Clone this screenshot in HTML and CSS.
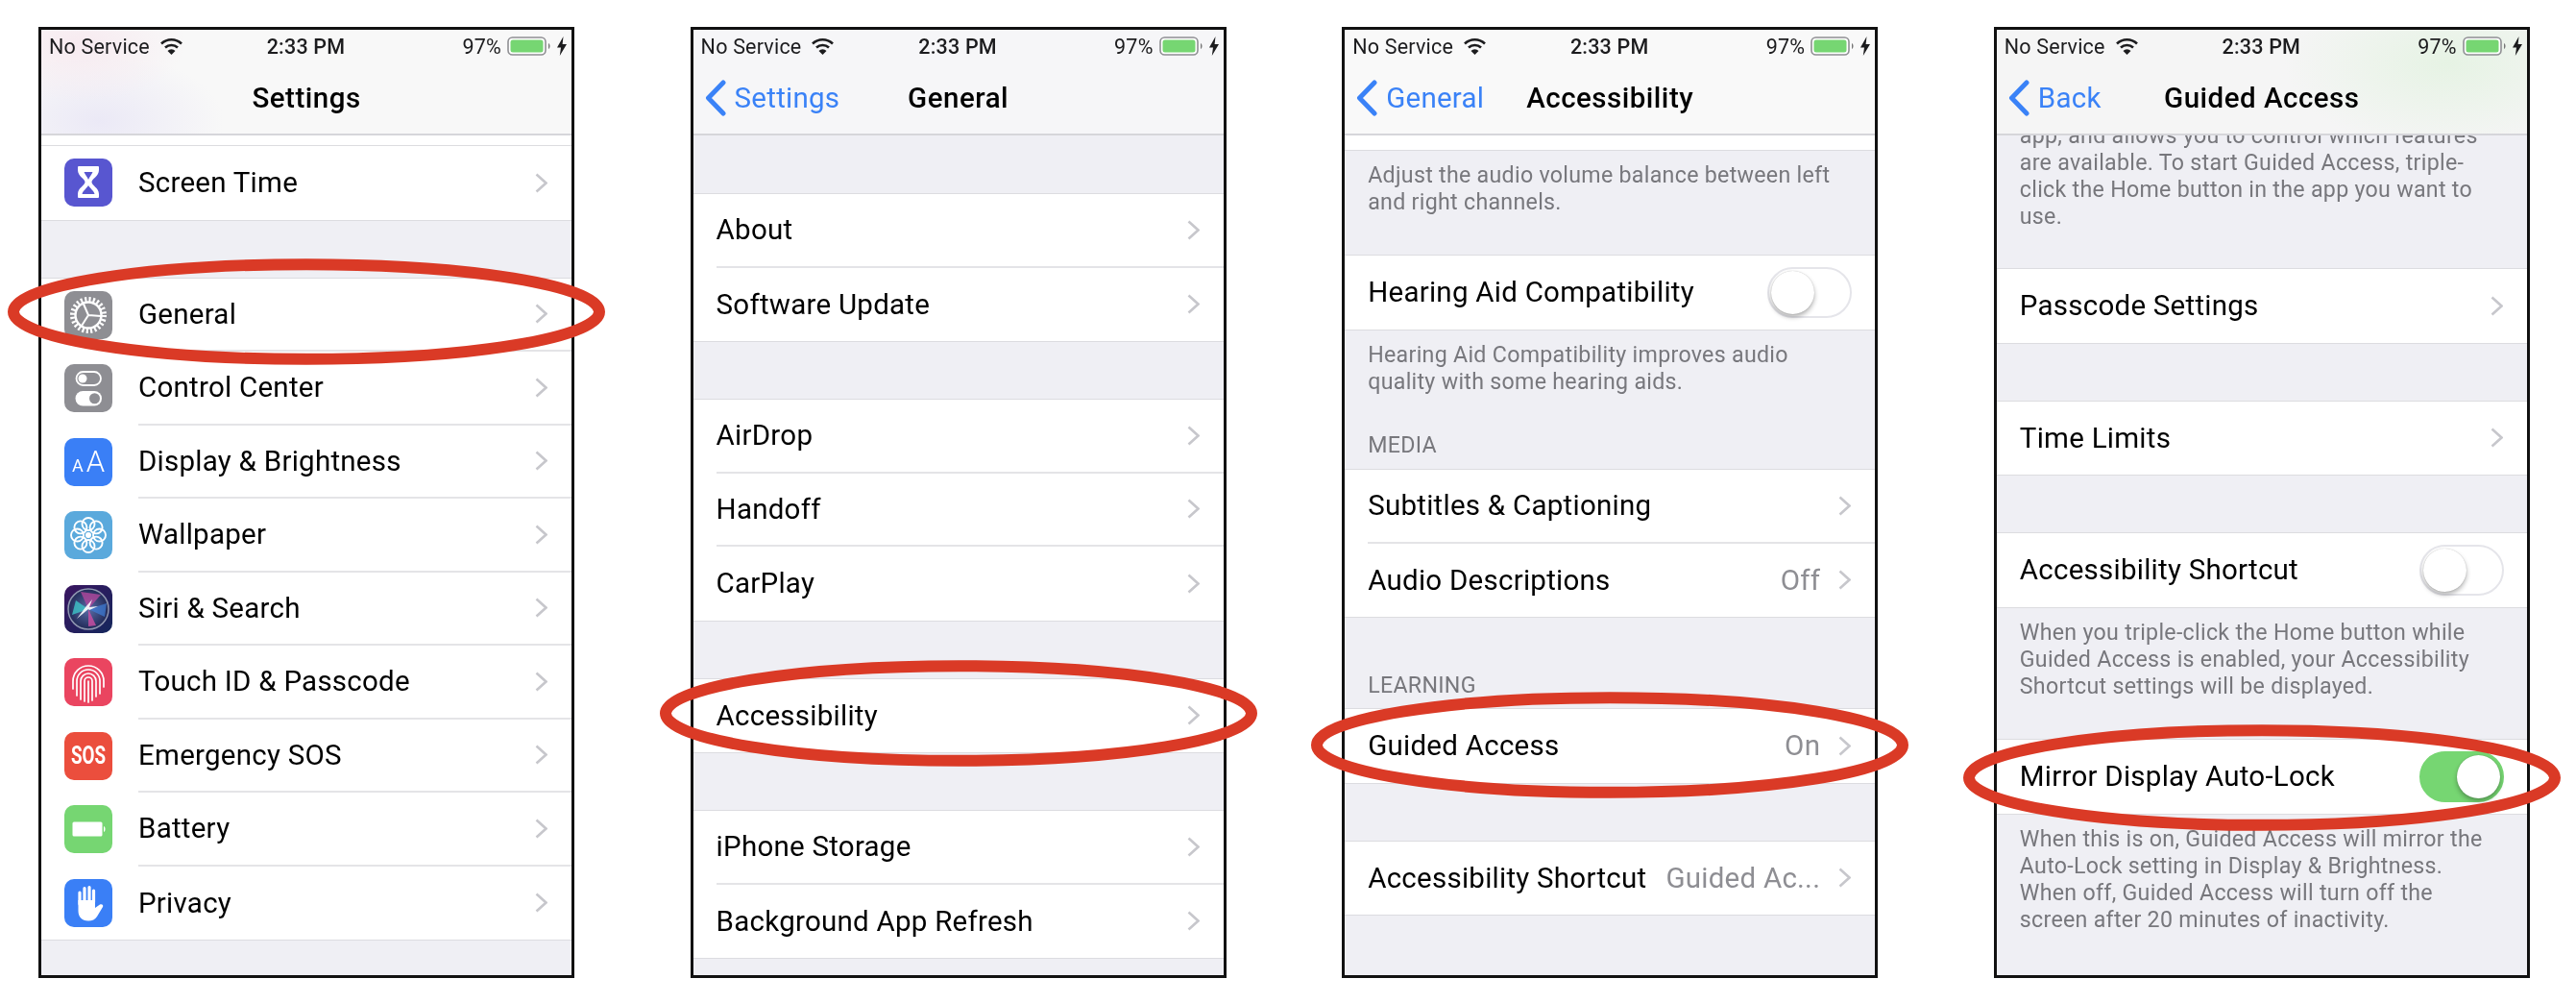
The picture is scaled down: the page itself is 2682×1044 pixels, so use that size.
FILE: index.html
```html
<!DOCTYPE html>
<html>
<head>
    <meta charset="utf-8">
    <title>Guided Access steps</title>
    <link rel="stylesheet" href="styles.css">
</head>
<body>
    <svg class="sprite">
        <symbol id="chev" viewBox="0 0 13 21"><path d="M1.500 1.500l10 9-10 9" fill="none" stroke="currentColor" stroke-width="2.600"/></symbol>
        <symbol id="back" viewBox="0 0 24 38"><path d="M20 3L4.500 19 20 35" fill="none" stroke="currentColor" stroke-width="5" stroke-linecap="round" stroke-linejoin="round"/></symbol>
        <symbol id="wifi" viewBox="0 0 24 18"><path d="M1.500 6.500a15 15 0 0 1 21 0M5.500 10.500a9.500 9.500 0 0 1 13 0" fill="none" stroke="currentColor" stroke-width="2.600"/><path d="M12 18l-4-4a5.600 5.600 0 0 1 8 0z" fill="currentColor"/></symbol>
        <symbol id="batt" viewBox="0 0 46 20"><rect x="1" y="1" width="39" height="18" rx="4.500" fill="#fff" stroke="#8f8f93" stroke-width="1.600"/><rect x="3.500" y="3.500" width="34" height="13" rx="2.500" fill="#76d672"/><path d="M43 7c2 1 2 5 0 6z" fill="#777"/></symbol>
        <symbol id="bolt" viewBox="0 0 10 20"><path d="M6.500 0L0 11.500h4L2.800 20 10 8H5.600z" fill="currentColor"/></symbol>
        <symbol id="ring" viewBox="0 0 624 111"><ellipse cx="312" cy="55.500" rx="306" ry="49.500" fill="none" stroke="#da3a26" stroke-width="12"/></symbol>
    </svg>

    <div class="board">
        <!-- settings -->
        <div class="phone">
            <div class="screen">
                <div class="bar bar-pink">
                    <div class="status">
                        <div class="status-left">No Service <svg class="wifi"><use href="#wifi"/></svg></div>
                        <div class="status-time">2:33 PM</div>
                        <div class="status-right">97% <svg class="batt"><use href="#batt"/></svg> <svg class="bolt"><use href="#bolt"/></svg></div>
                    </div>
                    <div class="nav">
                        <div></div>
                        <div class="nav-title">Settings</div>
                        <div></div>
                    </div>
                </div>
                <div class="content">
                    <div class="top-sliver"></div>
                    <div class="group">
                        <div class="row">
                            <svg class="icon" viewBox="0 0 50 50"><rect width="50" height="50" rx="10" fill="#5856d0"/><path d="M15 8h20a1 1 0 0 1 1 1v3c0 6.500-7.500 9-7.500 12.500S36 30.500 36 37v3a1 1 0 0 1-1 1H15a1 1 0 0 1-1-1v-3c0-6.500 7.500-9 7.500-12.500S14 18.500 14 12V9a1 1 0 0 1 1-1z" fill="#fff"/><path d="M20.500 14h9c-1 3-3.500 5-4.500 8-1-3-3.500-5-4.500-8zM18.500 37c1-4 5-6 6.500-9 1.500 3 5.500 5 6.500 9z" fill="#5856d0"/></svg>
                            <div class="row-body"><span class="label">Screen Time</span><svg class="chev"><use href="#chev"/></svg></div>
                        </div>
                    </div>
                    <div class="gap"></div>
                    <div class="group">
                        <div class="row">
                            <svg class="icon" viewBox="0 0 50 50"><rect width="50" height="50" rx="10" fill="#8e8e93"/><circle cx="25" cy="25" r="16.500" fill="none" stroke="#fff" stroke-width="5" stroke-dasharray="2.100 2.220"/><circle cx="25" cy="25" r="13.500" fill="none" stroke="#fff" stroke-width="2.400"/><path d="M25 25l-5-11.500M25 25l13 1M25 25l-7 11" stroke="#fff" stroke-width="2"/></svg>
                            <div class="row-body"><span class="label">General</span><svg class="chev"><use href="#chev"/></svg></div>
                        </div>
                        <div class="row">
                            <svg class="icon" viewBox="0 0 50 50"><rect width="50" height="50" rx="10" fill="#8e8e93"/><rect x="12.500" y="8" width="25.500" height="14" rx="7" fill="none" stroke="#fff" stroke-width="1.800"/><circle cx="19" cy="15" r="4.500" fill="#fff"/><rect x="11.500" y="28" width="27.500" height="15.500" rx="7.750" fill="#fff"/><circle cx="31.500" cy="35.750" r="5.500" fill="#8e8e93"/></svg>
                            <div class="row-body"><span class="label">Control Center</span><svg class="chev"><use href="#chev"/></svg></div>
                        </div>
                        <div class="row">
                            <div class="icon icon-blue icon-text"><span class="aa-small">A</span><span class="aa-large">A</span></div>
                            <div class="row-body"><span class="label">Display &amp; Brightness</span><svg class="chev"><use href="#chev"/></svg></div>
                        </div>
                        <div class="row">
                            <svg class="icon" viewBox="0 0 50 50"><rect width="50" height="50" rx="10" fill="#5aa9dc"/><g fill="none" stroke="#fff" stroke-width="1.900"><circle cx="25" cy="13.500" r="6.500"/><circle cx="33.100" cy="16.900" r="6.500"/><circle cx="36.500" cy="25" r="6.500"/><circle cx="33.100" cy="33.100" r="6.500"/><circle cx="25" cy="36.500" r="6.500"/><circle cx="16.900" cy="33.100" r="6.500"/><circle cx="13.500" cy="25" r="6.500"/><circle cx="16.900" cy="16.900" r="6.500"/></g><circle cx="25" cy="25" r="3" fill="#fff"/></svg>
                            <div class="row-body"><span class="label">Wallpaper</span><svg class="chev"><use href="#chev"/></svg></div>
                        </div>
                        <div class="row">
                            <svg class="icon" viewBox="0 0 50 50"><defs><linearGradient id="siriBg" x1="0" y1="0" x2="1" y2="1"><stop offset="0" stop-color="#3a1560"/><stop offset="1" stop-color="#14275c"/></linearGradient><radialGradient id="siriOrb"><stop offset="0" stop-color="#5a6ea8"/><stop offset="1" stop-color="#222a58"/></radialGradient></defs><rect width="50" height="50" rx="10" fill="url(#siriBg)"/><circle cx="25" cy="25" r="21" fill="url(#siriOrb)" stroke="#8f96b0" stroke-width="1.500"/><path d="M25 25L8 31 12 16z" fill="#3fc6c8" opacity=".8"/><path d="M25 25L17 7 38 10z" fill="#b0479c" opacity=".8"/><path d="M25 25l8 17-8 1z" fill="#cf4fa4" opacity=".8"/><path d="M25 25l19-6-2 14z" fill="#3f7fd8" opacity=".7"/><path d="M25 25L13 35l9-12 7-8-3 8 9-1-9 4z" fill="#fff" opacity=".9"/></svg>
                            <div class="row-body"><span class="label">Siri &amp; Search</span><svg class="chev"><use href="#chev"/></svg></div>
                        </div>
                        <div class="row">
                            <svg class="icon" viewBox="0 0 50 50"><rect width="50" height="50" rx="10" fill="#ea4560"/><path d="M9 32V24a16 16 0 0 1 32 0v6M13 39V24a12 12 0 0 1 24 0v13M17 43V24a8 8 0 0 1 16 0v16M21 45V24a4 4 0 0 1 8 0v20M25 24v22" fill="none" stroke="#fff" stroke-width="1.700" stroke-linecap="round"/></svg>
                            <div class="row-body"><span class="label">Touch ID &amp; Passcode</span><svg class="chev"><use href="#chev"/></svg></div>
                        </div>
                        <div class="row">
                            <div class="icon icon-red icon-text"><span class="sos">SOS</span></div>
                            <div class="row-body"><span class="label">Emergency SOS</span><svg class="chev"><use href="#chev"/></svg></div>
                        </div>
                        <div class="row">
                            <svg class="icon" viewBox="0 0 50 50"><rect width="50" height="50" rx="10" fill="#76d672"/><rect x="8.500" y="17.500" width="31" height="15" rx="1.500" fill="#fff"/><path d="M41 22c2 .5 2 5.500 0 6z" fill="#fff"/></svg>
                            <div class="row-body"><span class="label">Battery</span><svg class="chev"><use href="#chev"/></svg></div>
                        </div>
                        <div class="row">
                            <svg class="icon" viewBox="0 0 50 50"><rect width="50" height="50" rx="10" fill="#3a7ff6"/><path d="M16 26V14M21 24V9.500M26 24V8.500M30.500 24V12" stroke="#fff" stroke-width="3.200" stroke-linecap="round"/><path d="M14.500 22H32v8l5-3.500c2-1 4 .5 3 2.500l-6 10c-2 3-5 4.500-9 4.500-7 0-10.500-4.500-10.500-10.500z" fill="#fff"/></svg>
                            <div class="row-body"><span class="label">Privacy</span><svg class="chev"><use href="#chev"/></svg></div>
                        </div>
                    </div>
                </div>
            </div>
            <svg class="ring ring-1"><use href="#ring"/></svg>
        </div>

        <!-- general -->
        <div class="phone">
            <div class="screen">
                <div class="bar">
                    <div class="status">
                        <div class="status-left">No Service <svg class="wifi"><use href="#wifi"/></svg></div>
                        <div class="status-time">2:33 PM</div>
                        <div class="status-right">97% <svg class="batt"><use href="#batt"/></svg> <svg class="bolt"><use href="#bolt"/></svg></div>
                    </div>
                    <div class="nav">
                        <div class="nav-back"><svg class="back"><use href="#back"/></svg>Settings</div>
                        <div class="nav-title">General</div>
                        <div></div>
                    </div>
                </div>
                <div class="content">
                    <div class="gap"></div>
                    <div class="group">
                        <div class="row"><div class="row-body"><span class="label">About</span><svg class="chev"><use href="#chev"/></svg></div></div>
                        <div class="row"><div class="row-body"><span class="label">Software Update</span><svg class="chev"><use href="#chev"/></svg></div></div>
                    </div>
                    <div class="gap"></div>
                    <div class="group">
                        <div class="row"><div class="row-body"><span class="label">AirDrop</span><svg class="chev"><use href="#chev"/></svg></div></div>
                        <div class="row"><div class="row-body"><span class="label">Handoff</span><svg class="chev"><use href="#chev"/></svg></div></div>
                        <div class="row"><div class="row-body"><span class="label">CarPlay</span><svg class="chev"><use href="#chev"/></svg></div></div>
                    </div>
                    <div class="gap"></div>
                    <div class="group">
                        <div class="row"><div class="row-body"><span class="label">Accessibility</span><svg class="chev"><use href="#chev"/></svg></div></div>
                    </div>
                    <div class="gap"></div>
                    <div class="group">
                        <div class="row"><div class="row-body"><span class="label">iPhone Storage</span><svg class="chev"><use href="#chev"/></svg></div></div>
                        <div class="row"><div class="row-body"><span class="label">Background App Refresh</span><svg class="chev"><use href="#chev"/></svg></div></div>
                    </div>
                </div>
            </div>
            <svg class="ring ring-2"><use href="#ring"/></svg>
        </div>

        <!-- accessibility -->
        <div class="phone">
            <div class="screen">
                <div class="bar bar-light">
                    <div class="status">
                        <div class="status-left">No Service <svg class="wifi"><use href="#wifi"/></svg></div>
                        <div class="status-time">2:33 PM</div>
                        <div class="status-right">97% <svg class="batt"><use href="#batt"/></svg> <svg class="bolt"><use href="#bolt"/></svg></div>
                    </div>
                    <div class="nav">
                        <div class="nav-back"><svg class="back"><use href="#back"/></svg>General</div>
                        <div class="nav-title">Accessibility</div>
                        <div></div>
                    </div>
                </div>
                <div class="content">
                    <div class="top-sliver group"></div>
                    <div class="note">Adjust the audio volume balance between left<br>and right channels.</div>
                    <div class="group">
                        <div class="row"><div class="row-body"><span class="label">Hearing Aid Compatibility</span><div class="toggle"><div class="knob"></div></div></div></div>
                    </div>
                    <div class="note note-short">Hearing Aid Compatibility improves audio<br>quality with some hearing aids.</div>
                    <div class="section section-media">MEDIA</div>
                    <div class="group">
                        <div class="row"><div class="row-body"><span class="label">Subtitles &amp; Captioning</span><svg class="chev"><use href="#chev"/></svg></div></div>
                        <div class="row"><div class="row-body"><span class="label">Audio Descriptions</span><span class="value">Off</span><svg class="chev"><use href="#chev"/></svg></div></div>
                    </div>
                    <div class="section section-learning">LEARNING</div>
                    <div class="group">
                        <div class="row"><div class="row-body"><span class="label">Guided Access</span><span class="value">On</span><svg class="chev"><use href="#chev"/></svg></div></div>
                    </div>
                    <div class="gap"></div>
                    <div class="group">
                        <div class="row"><div class="row-body"><span class="label">Accessibility Shortcut</span><span class="value">Guided Ac...</span><svg class="chev"><use href="#chev"/></svg></div></div>
                    </div>
                </div>
            </div>
            <svg class="ring ring-3"><use href="#ring"/></svg>
        </div>

        <!-- guided access -->
        <div class="phone">
            <div class="screen">
                <div class="bar bar-green">
                    <div class="status">
                        <div class="status-left">No Service <svg class="wifi"><use href="#wifi"/></svg></div>
                        <div class="status-time">2:33 PM</div>
                        <div class="status-right">97% <svg class="batt"><use href="#batt"/></svg> <svg class="bolt"><use href="#bolt"/></svg></div>
                    </div>
                    <div class="nav">
                        <div class="nav-back"><svg class="back"><use href="#back"/></svg>Back</div>
                        <div class="nav-title">Guided Access</div>
                        <div></div>
                    </div>
                </div>
                <div class="content">
                    <div class="note note-scrolled">app, and allows you to control which features<br>are available. To start Guided Access, triple-<br>click the Home button in the app you want to<br>use.</div>
                    <div class="group">
                        <div class="row"><div class="row-body"><span class="label">Passcode Settings</span><svg class="chev"><use href="#chev"/></svg></div></div>
                    </div>
                    <div class="gap"></div>
                    <div class="group">
                        <div class="row"><div class="row-body"><span class="label">Time Limits</span><svg class="chev"><use href="#chev"/></svg></div></div>
                    </div>
                    <div class="gap"></div>
                    <div class="group">
                        <div class="row"><div class="row-body"><span class="label">Accessibility Shortcut</span><div class="toggle"><div class="knob"></div></div></div></div>
                    </div>
                    <div class="note">When you triple-click the Home button while<br>Guided Access is enabled, your Accessibility<br>Shortcut settings will be displayed.</div>
                    <div class="group">
                        <div class="row"><div class="row-body"><span class="label">Mirror Display Auto-Lock</span><div class="toggle toggle-on"><div class="knob"></div></div></div></div>
                    </div>
                    <div class="note">When this is on, Guided Access will mirror the<br>Auto-Lock setting in Display &amp; Brightness.<br>When off, Guided Access will turn off the<br>screen after 20 minutes of inactivity.</div>
                </div>
            </div>
            <svg class="ring ring-4"><use href="#ring"/></svg>
        </div>
    </div>
</body>
</html>
```

FILE: styles.css
```css
body {
    margin: 0;
    background: #fff;
    font-family: Roboto, "Liberation Sans", sans-serif;
    color: #000;
}
.sprite {
    position: absolute;
    width: 0;
    height: 0;
}
.board {
    display: flex;
    gap: 120.6px;
    padding: 28px 0 0 40px;
}
.phone {
    position: relative;
    flex: none;
    box-sizing: border-box;
    width: 558px;
    height: 990px;
    border: 3px solid #111;
}
.screen {
    display: flex;
    flex-direction: column;
    height: 100%;
    background: #efeff4;
    overflow: hidden;
    filter: blur(.5px);
}

/* top bar */
.bar {
    flex: none;
    height: 110px;
    box-sizing: border-box;
    background: #f6f6f8;
    border-bottom: 2px solid #d6d6da;
}
.bar-light {
    background: #f9f9f9;
}
.bar-pink {
    background:
        radial-gradient(ellipse 110px 60px at 40px 15px, #f7eaf0, rgba(247, 247, 248, 0) 100%),
        radial-gradient(ellipse 130px 70px at 60px 95px, #ebe9f6, rgba(247, 247, 248, 0) 100%),
        #f8f8f8;
}
.bar-green {
    background: radial-gradient(ellipse 170px 90px at 470px 35px, #e6f3e4, rgba(247, 247, 247, 0) 100%), #f5f5f5;
}
.status {
    display: grid;
    grid-template-columns: 1fr auto 1fr;
    align-items: center;
    height: 34px;
    padding: 0 5px 0 8px;
    font-size: 21.5px;
    letter-spacing: .2px;
    color: #1c1c1e;
}
.status-left {
    display: flex;
    align-items: center;
    gap: 10px;
}
.status-time {
    margin-right: 4px;
    font-weight: 500;
    font-size: 21.5px;
}
.status-right {
    display: flex;
    align-items: center;
    justify-content: flex-end;
    gap: 6px;
}
.wifi {
    width: 25px;
    height: 18px;
}
.batt {
    width: 46px;
    height: 20px;
}
.bolt {
    width: 10px;
    height: 20px;
}
.nav {
    display: grid;
    grid-template-columns: 1fr auto 1fr;
    align-items: center;
    height: 74px;
}
.nav-title {
    font-size: 29.5px;
    font-weight: 500;
    letter-spacing: .5px;
}
.nav-back {
    display: flex;
    align-items: center;
    gap: 8px;
    padding-left: 11px;
    font-size: 29.5px;
    letter-spacing: .25px;
    color: #3a82f7;
}
.back {
    width: 24px;
    height: 38px;
}

/* list */
.content {
    flex: 1;
    min-height: 0;
    overflow: hidden;
}
.top-sliver {
    height: 11px;
    background: #fff;
}
.top-sliver.group {
    height: 14.5px;
}
.gap {
    height: 61px;
}
.group {
    background: #fff;
    box-shadow: 0 -1px 0 #dcdce0, 0 1px 0 #dcdce0;
}
.row {
    display: flex;
    align-items: center;
    height: 76.5px;
    padding-left: 24px;
}
.row-body {
    flex: 1;
    min-width: 0;
    display: flex;
    align-items: center;
    height: 100%;
    box-sizing: border-box;
    padding-right: 25px;
    border-bottom: 2px solid #e4e4e7;
}
.row:last-child .row-body {
    border-bottom: 0;
}
.label {
    flex: none;
    font-size: 29.5px;
    letter-spacing: .25px;
}
.value {
    margin-left: auto;
    padding-right: 19px;
    font-size: 29.5px;
    letter-spacing: .25px;
    color: #8e8e93;
}
.chev {
    flex: none;
    width: 13px;
    height: 21px;
    margin-left: auto;
    color: #c7c7cc;
}
.value + .chev {
    margin-left: 0;
}
.icon {
    flex: none;
    width: 50px;
    height: 50px;
    margin-right: 27px;
}
.icon-text {
    display: flex;
    align-items: center;
    justify-content: center;
    border-radius: 10px;
    color: #fff;
}
.icon-blue {
    background: #3a7ff6;
    align-items: baseline;
    gap: 3px;
    line-height: 50px;
}
.icon-red {
    background: #eb4e3d;
}
.aa-small {
    font-size: 18px;
}
.aa-large {
    font-size: 31px;
    font-weight: 300;
}
.sos {
    font-size: 25px;
    font-weight: 700;
    transform: scaleX(.75);
}

/* footers and section titles */
.note {
    padding: 12.5px 24px 42px;
    font-size: 23.2px;
    letter-spacing: .29px;
    line-height: 28px;
    color: #77777c;
}
.note-short {
    padding-bottom: 13px;
}
.note-scrolled {
    margin-top: -14px;
    padding: 0 24px 41px;
}
.section {
    padding: 0 24px 11px;
    font-size: 23.2px;
    letter-spacing: .29px;
    line-height: 28px;
    color: #77777c;
}
.section-media {
    padding-top: 25px;
    padding-bottom: 12px;
}
.section-learning {
    padding-top: 57px;
}

/* switches */
.toggle {
    flex: none;
    box-sizing: border-box;
    width: 88px;
    height: 53px;
    margin-left: auto;
    margin-right: -1px;
    padding: 2px;
    border: 2px solid #e5e5ea;
    border-radius: 27px;
    background: #fff;
}
.knob {
    width: 45px;
    height: 45px;
    border-radius: 50%;
    background: #fff;
    box-shadow: 0 3px 5px rgba(0, 0, 0, .3), 0 0 1px rgba(0, 0, 0, .25);
}
.toggle-on {
    border-color: #76d672;
    background: #76d672;
}
.toggle-on .knob {
    margin-left: auto;
}

/* red markers drawn over the screenshots */
.ring {
    position: absolute;
    left: -35px;
    width: 622px;
    height: 111px;
}
.ring-1 {
    top: 238px;
}
.ring-2 {
    top: 656px;
}
.ring-3 {
    top: 689px;
}
.ring-4 {
    top: 723px;
}
```
